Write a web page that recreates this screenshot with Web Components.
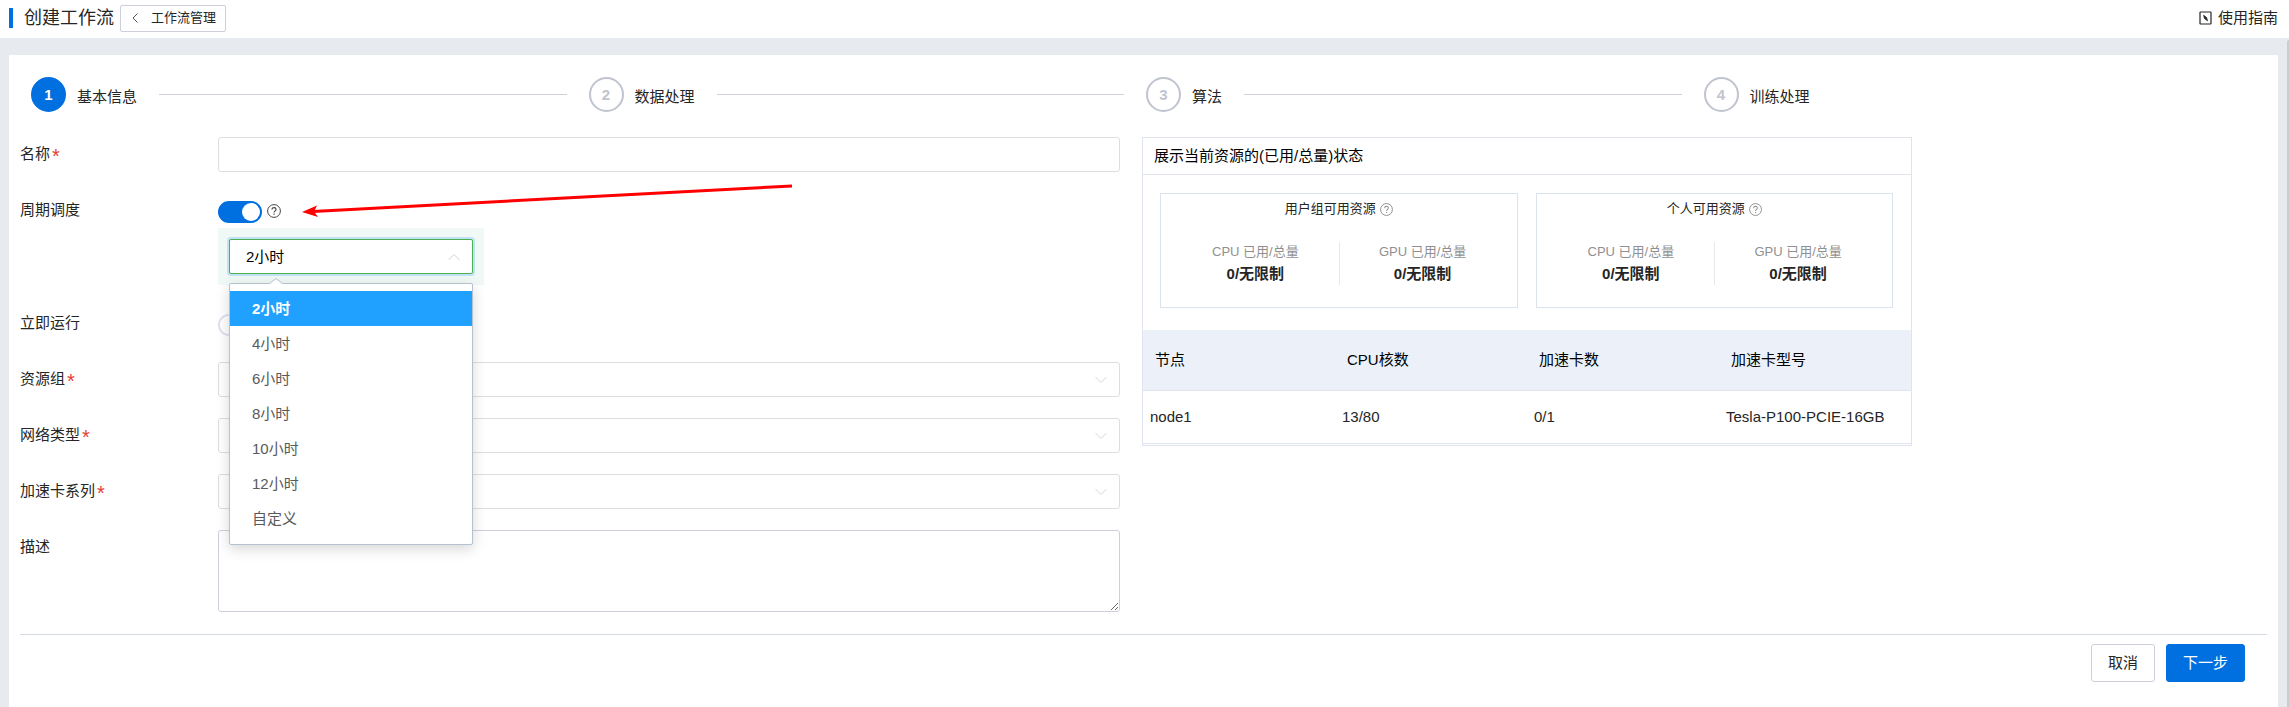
<!DOCTYPE html>
<html lang="zh-CN">
<head>
<meta charset="utf-8">
<title>创建工作流</title>
<style>
  html, body { margin: 0; height: 100%; }
  body {
    font: 15px/20px "Liberation Sans", "Noto Sans CJK SC", sans-serif;
    color: #252525;
    --blue: #006fe0;
    --line: #dcdfe2;
    --control: #cdcfdc;
    --panel-line: #dfe4ee;
  }
</style>
</head>
<body>
<workflow-page></workflow-page>

<script>
const base = '*{box-sizing:border-box} :host{display:block}';

function define(name, render) {
  customElements.define(name, class extends HTMLElement {
    connectedCallback() {
      if (this.shadowRoot) return;
      this.attachShadow({ mode: 'open' }).innerHTML = render(this);
    }
  });
}

/* Question mark in a circle */
define('help-icon', () => `
  <style>${base}
    :host { display: block; width: 14px; height: 14px; flex: none; }
    svg { display: block; width: 100%; height: 100%; }
  </style>
  <svg viewBox="0 0 14 14" fill="none" stroke="currentColor" stroke-width="1" aria-hidden="true">
    <circle cx="7" cy="7" r="6.4"/>
    <path d="M5 5.6C5 4.3 5.9 3.6 7 3.6s2 .7 2 1.9C9 6.9 7.1 6.9 7.1 8.6" stroke-width="1.1"/>
    <path d="M7.1 9.6v1.1" stroke-width="1.2"/>
  </svg>`);

define('page-header', () => `
  <style>${base}
    :host { background: #fff; }
    header { display: flex; align-items: center; height: 38px; padding: 0 11px 2px 9px; }
    .bar { width: 4px; height: 20px; background: var(--blue); margin-right: 11px; }
    h1 { margin: 0 6px 0 0; font-size: 18px; line-height: 24px; font-weight: 400; }
    button { display: flex; align-items: center; gap: 11px; height: 27px; padding: 0 9px 0 10px;
      border: 1px solid var(--control); border-radius: 2px; background: #fff; color: inherit;
      font: inherit; font-size: 13px; }
    svg { display: block; }
    a { margin-left: auto; display: flex; align-items: center; gap: 6px; color: inherit; text-decoration: none; }
  </style>
  <header>
    <span class="bar"></span>
    <h1>创建工作流</h1>
    <button type="button">
      <svg width="9" height="12" viewBox="0 0 9 12" fill="none" stroke="#555"><path d="M6.5 1.5 2 6l4.500 4.500"/></svg>
      <span>工作流管理</span>
    </button>
    <a href="#guide">
      <svg width="13" height="14" viewBox="0 0 13 14" fill="none" stroke="#252525">
        <rect x="1" y="1" width="11" height="12" rx=".5" stroke-width="1.200"/>
        <path d="M4.600 4.300 7.600 6.500 8.500 9.800 5.500 7.500Z" fill="#252525" stroke-width=".8"/>
      </svg>
      <span>使用指南</span>
    </a>
  </header>`);

define('step-item', el => `
  <style>${base}
    :host { display: flex; align-items: center; height: 35px; min-width: 0; }
    .num { width: 35px; height: 35px; border-radius: 50%; border: 2px solid #c0c4ce; color: #c0c4ce;
      display: grid; place-items: center; font-weight: 700; flex: none; }
    .label { margin: 4px 0 0 11px; white-space: nowrap; }
    .line { flex: 1; height: 1px; background: #cfd1da; margin: 0 22px; }
    :host([active]) .num { background: var(--blue); border-color: var(--blue); color: #fff; }
    :host(:last-of-type) .line { visibility: hidden; }
  </style>
  <span class="num">${el.getAttribute('number')}</span>
  <span class="label"><slot></slot></span>
  <span class="line"></span>`);

define('step-bar', () => `
  <style>${base}
    :host { display: grid; grid-template-columns: repeat(4, minmax(0, 1fr)); padding: 0 17px 0 22px; }
  </style>
  <slot></slot>`);

/* One form row: label and its control */
define('form-field', el => {
  const kind = el.getAttribute('kind');
  const controls = {
    text: '<input id="c" class="box" type="text">',
    area: '<textarea id="c" class="box"></textarea>',
    select: `<div class="pick"><select id="c" class="box"><option></option></select>
      <svg width="14" height="8" viewBox="0 0 14 8" fill="none" stroke="#d5d8de"><path d="M1.500 1 7 6.500 12.500 1"/></svg></div>`,
    toggle: `<div class="switch"><input id="c" type="checkbox" role="switch" ${el.hasAttribute('on') ? 'checked' : ''}>
      ${el.hasAttribute('help') ? '<help-icon></help-icon>' : ''}</div>`
  };
  return `
  <style>${base}
    :host { display: grid; grid-template-columns: 198px minmax(0, 1fr); align-items: start; }
    label { line-height: 34px; display: flex; align-items: center; gap: 2px; }
    .req { color: #e23d31; font-size: 20px; line-height: 20px; height: 16px; }
    .box { display: block; width: 100%; height: 35px; border: 1px solid var(--line); border-radius: 3px;
      background: #fff; color: inherit; font: inherit; padding: 0 16px; outline: none; appearance: none; }
    textarea.box { height: 82px; border-color: var(--control); padding: 8px 11px; resize: vertical; }
    .pick { display: grid; align-items: center; }
    .pick > * { grid-area: 1 / 1; }
    .pick svg { justify-self: end; margin-right: 12px; pointer-events: none; }
    .switch { display: flex; align-items: center; gap: 5px; height: 35px; color: #444; }
    .switch input { appearance: none; margin: 3px 0 0; width: 44px; height: 22px; border-radius: 11px;
      border: 2px solid #dfe1ee; background: #fff; display: flex; align-items: center; }
    .switch input::before { content: ""; width: 18px; height: 18px; border-radius: 50%; background: #fff; }
    .switch input:checked { background: var(--blue); border-color: var(--blue); justify-content: end; }
  </style>
  <label for="c">${el.getAttribute('label')}${el.hasAttribute('required') ? '<span class="req">*</span>' : ''}</label>
  <div>${controls[kind]}<slot></slot></div>`;
});

/* Period picker with its list open */
define('period-picker', () => {
  const values = ['2小时', '4小时', '6小时', '8小时', '10小时', '12小时', '自定义'];
  return `
  <style>${base}
    :host { width: 266px; padding: 11px; background: #f0f9f5; }
    .pick { position: relative; display: grid; align-items: center; }
    select, .caret { grid-area: 1 / 1; }
    select { width: 100%; height: 35px; padding: 0 16px; appearance: none; font: inherit; color: #000;
      background: #fff; border: 1px solid #4fb052; border-radius: 2px; box-shadow: 0 0 0 2px #bfe3f5; outline: none; }
    .caret { justify-self: end; margin-right: 12px; pointer-events: none; }
    .menu { position: absolute; z-index: 2; top: 44px; left: 0; width: 100%; background: #fff;
      border: 1px solid #b4c2cf; border-radius: 2px; box-shadow: 0 4px 14px rgba(0,0,0,.16); }
    .tip { position: absolute; top: -6px; left: 39px; display: block; }
    ul { list-style: none; margin: 0; padding: 7px 0 8px; }
    li { height: 35px; line-height: 35px; padding-left: 22px; color: #5a5a5a; }
    li[aria-selected=true] { background: #20a0ff; color: #fff; font-weight: 700; }
  </style>
  <div class="pick">
    <select aria-label="调度周期">${values.map(v => `<option>${v}</option>`).join('')}</select>
    <svg class="caret" width="14" height="8" viewBox="0 0 14 8" fill="none" stroke="#cfd3dc"><path d="M1.500 7 7 1.500 12.500 7"/></svg>
    <div class="menu">
      <svg class="tip" width="14" height="7" viewBox="0 0 14 7"><path d="M0 7 1 5.500 7 .5 13 5.500 14 7Z" fill="#fff"/><path d="M.5 5.500 7 .5 13.500 5.500" fill="none" stroke="#b4c2cf"/></svg>
      <ul role="listbox">${values.map((v, i) => `<li role="option" aria-selected="${i === 0}">${v}</li>`).join('')}</ul>
    </div>
  </div>`;
});

define('quota-card', el => `
  <style>${base}
    :host { border: 1px solid #dbe4ee; height: 115px; padding: 4px 11px 0; }
    h3 { margin: 0 0 22px; display: flex; justify-content: center; align-items: center; gap: 4px;
      font-size: 13px; line-height: 22px; font-weight: 400; }
    help-icon { width: 13px; height: 13px; color: #8c8c8c; }
    .pair { display: grid; grid-template-columns: 1fr 1fr; text-align: center; }
    .pair > div { height: 43px; }
    .pair > div + div { border-left: 1px solid #e6e8ec; }
    small { display: block; font-size: 13px; line-height: 20px; color: #909090; }
    strong { display: block; line-height: 24px; }
  </style>
  <h3>${el.getAttribute('heading')}<help-icon></help-icon></h3>
  <div class="pair">
    <div><small>CPU 已用/总量</small><strong>0/无限制</strong></div>
    <div><small>GPU 已用/总量</small><strong>0/无限制</strong></div>
  </div>`);

define('resource-panel', () => `
  <style>${base}
    :host { border: 1px solid var(--panel-line); align-self: start; padding-bottom: 1px; }
    h2 { margin: 0; padding: 0 11px; height: 37px; font-size: 15px; line-height: 36px; font-weight: 400; color: #000;
      border-bottom: 1px solid var(--panel-line); }
    .cards { display: grid; grid-template-columns: 1fr 1fr; gap: 18px; padding: 18px 18px 22px 17px; }
    table { width: 100%; border-spacing: 0; table-layout: fixed; }
    th { height: 61px; padding: 0 12px; text-align: left; font-weight: 400; background: #ebf0f9; color: #000;
      border-bottom: 1px solid var(--panel-line); }
    td { height: 53px; padding: 0 7px; border-bottom: 1px solid var(--panel-line); white-space: nowrap; }
  </style>
  <h2>展示当前资源的(已用/总量)状态</h2>
  <div class="cards">
    <quota-card heading="用户组可用资源"></quota-card>
    <quota-card heading="个人可用资源"></quota-card>
  </div>
  <table>
    <thead><tr><th>节点</th><th>CPU核数</th><th>加速卡数</th><th>加速卡型号</th></tr></thead>
    <tbody><tr><td>node1</td><td>13/80</td><td>0/1</td><td>Tesla-P100-PCIE-16GB</td></tr></tbody>
  </table>`);

define('action-button', () => `
  <style>${base}
    button { height: 38px; padding: 0 16px; border: 1px solid var(--control); border-radius: 3px;
      background: #fff; color: inherit; font: inherit; display: block; }
    :host([primary]) button { background: var(--blue); border-color: var(--blue); color: #fff; }
  </style>
  <button type="button"><slot></slot></button>`);

define('pointer-arrow', () => `
  <style>${base}
    :host { position: absolute; z-index: 3; left: 281px; top: -9px; pointer-events: none; }
    svg { display: block; }
  </style>
  <svg width="492" height="34" viewBox="0 0 492 34" aria-hidden="true">
    <path d="M12 27.500 491 2" stroke="#f00" stroke-width="3"/>
    <path d="M1 28 16 21.500 13 27.500 17 33Z" fill="#f00"/>
  </svg>`);

define('workflow-page', () => `
  <style>${base}
    :host { display: flex; flex-direction: column; min-height: 100vh; background: #e7ebef; }
    .body { flex: 1; display: grid; grid-template-columns: minmax(0, 1fr) 2px; column-gap: 9px; padding-left: 9px; }
    .scroll { background: #c9cdd1; border-radius: 2px 0 0 0; margin-top: 2px; }
    main { background: #fff; margin-top: 17px; padding-top: 22px; }
    .columns { display: grid; grid-template-columns: 1100fr 770fr 333fr; gap: 22px; margin: 25px 11px 0; }
    form { display: grid; gap: 21px; }
    .period { position: relative; }
    footer { display: flex; justify-content: flex-end; gap: 11px; margin: 22px 11px 0; padding: 9px 22px 24px 0;
      border-top: 1px solid #d5dbe2; }
  </style>
  <page-header></page-header>
  <div class="body">
    <main>
      <step-bar>
        <step-item number="1" active>基本信息</step-item>
        <step-item number="2">数据处理</step-item>
        <step-item number="3">算法</step-item>
        <step-item number="4">训练处理</step-item>
      </step-bar>
      <div class="columns">
        <form>
          <form-field kind="text" label="名称" required></form-field>
          <div class="period">
            <form-field kind="toggle" label="周期调度" on help><period-picker></period-picker></form-field>
            <pointer-arrow></pointer-arrow>
          </div>
          <form-field kind="toggle" label="立即运行"></form-field>
          <form-field kind="select" label="资源组" required></form-field>
          <form-field kind="select" label="网络类型" required></form-field>
          <form-field kind="select" label="加速卡系列" required></form-field>
          <form-field kind="area" label="描述"></form-field>
        </form>
        <resource-panel></resource-panel>
      </div>
      <footer>
        <action-button>取消</action-button>
        <action-button primary>下一步</action-button>
      </footer>
    </main>
    <div class="scroll"></div>
  </div>`);
</script>
</body>
</html>
